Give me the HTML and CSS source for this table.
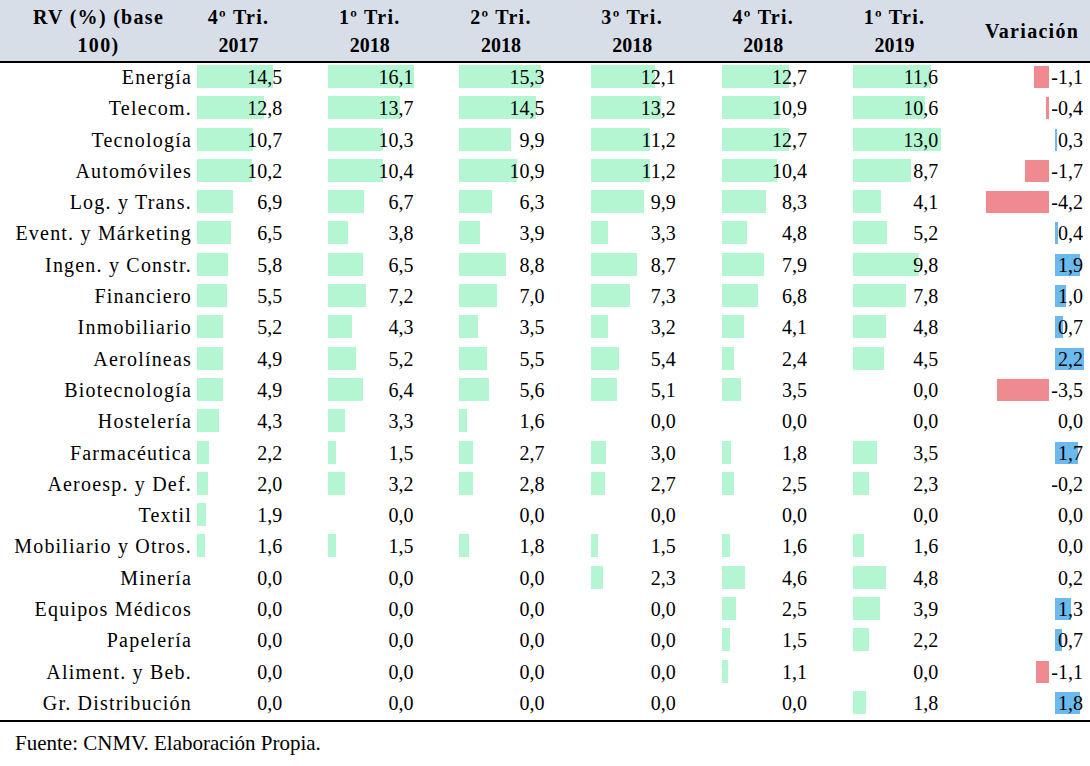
FILE: index.html
```html
<!DOCTYPE html>
<html lang="es">
<head>
<meta charset="utf-8">
<title>RV (%) por sector</title>
<link rel="stylesheet" href="styles.css">
</head>
<body>
<div class="table">
  <div class="row head">
    <div class="hcell lab"><span>RV (%) (base<br>100)</span></div>
    <div class="hcell num"><span>4º Tri.<br><b class="yr">2017</b></span></div>
    <div class="hcell num"><span>1º Tri.<br><b class="yr">2018</b></span></div>
    <div class="hcell num"><span>2º Tri.<br><b class="yr">2018</b></span></div>
    <div class="hcell num"><span>3º Tri.<br><b class="yr">2018</b></span></div>
    <div class="hcell num"><span>4º Tri.<br><b class="yr">2018</b></span></div>
    <div class="hcell num"><span>1º Tri.<br><b class="yr">2019</b></span></div>
    <div class="hcell var"><span>Variación</span></div>
  </div>
  <div class="body" id="body"></div>
</div>
<p class="source">Fuente: CNMV. Elaboración Propia.</p>
<script src="script.js"></script>
</body>
</html>
```

FILE: script.js
```js
var rows = [
  ["Energía",            ["14,5",76],["16,1",86],["15,3",82],["12,1",64],["12,7",67],["11,6",78],["-1,1",-15]],
  ["Telecom.",           ["12,8",67],["13,7",72],["14,5",77],["13,2",70],["10,9",58],["10,6",72],["-0,4",-3]],
  ["Tecnología",         ["10,7",56],["10,3",55],["9,9",52],["11,2",59],["12,7",67],["13,0",88],["0,3",2]],
  ["Automóviles",        ["10,2",55],["10,4",55],["10,9",58],["11,2",59],["10,4",55],["8,7",58],["-1,7",-24]],
  ["Log. y Trans.",      ["6,9",36],["6,7",36],["6,3",33],["9,9",53],["8,3",44],["4,1",28],["-4,2",-63]],
  ["Event. y Márketing", ["6,5",34],["3,8",20],["3,9",21],["3,3",17],["4,8",25],["5,2",34],["0,4",3]],
  ["Ingen. y Constr.",   ["5,8",31],["6,5",35],["8,8",47],["8,7",46],["7,9",42],["9,8",66],["1,9",25]],
  ["Financiero",         ["5,5",30],["7,2",38],["7,0",38],["7,3",39],["6,8",36],["7,8",53],["1,0",11]],
  ["Inmobiliario",       ["5,2",26],["4,3",24],["3,5",19],["3,2",17],["4,1",22],["4,8",33],["0,7",8]],
  ["Aerolíneas",         ["4,9",26],["5,2",28],["5,5",28],["5,4",28],["2,4",12],["4,5",31],["2,2",29]],
  ["Biotecnología",      ["4,9",26],["6,4",35],["5,6",30],["5,1",26],["3,5",19],["0,0",0],["-3,5",-52]],
  ["Hostelería",         ["4,3",22],["3,3",17],["1,6",8],["0,0",0],["0,0",0],["0,0",0],["0,0",0]],
  ["Farmacéutica",       ["2,2",12],["1,5",8],["2,7",14],["3,0",15],["1,8",9],["3,5",24],["1,7",23]],
  ["Aeroesp. y Def.",    ["2,0",11],["3,2",17],["2,8",14],["2,7",14],["2,5",12],["2,3",16],["-0,2",0]],
  ["Textil",             ["1,9",9],["0,0",0],["0,0",0],["0,0",0],["0,0",0],["0,0",0],["0,0",0]],
  ["Mobiliario y Otros.",["1,6",8],["1,5",8],["1,8",10],["1,5",7],["1,6",8],["1,6",11],["0,0",0]],
  ["Minería",            ["0,0",0],["0,0",0],["0,0",0],["2,3",12],["4,6",23],["4,8",33],["0,2",0]],
  ["Equipos Médicos",    ["0,0",0],["0,0",0],["0,0",0],["0,0",0],["2,5",14],["3,9",27],["1,3",16]],
  ["Papelería",          ["0,0",0],["0,0",0],["0,0",0],["0,0",0],["1,5",8],["2,2",16],["0,7",7]],
  ["Aliment. y Beb.",    ["0,0",0],["0,0",0],["0,0",0],["0,0",0],["1,1",6],["0,0",0],["-1,1",-13]],
  ["Gr. Distribución",   ["0,0",0],["0,0",0],["0,0",0],["0,0",0],["0,0",0],["1,8",13],["1,8",25]]
];
var body = document.getElementById("body");
rows.forEach(function (r) {
  var row = document.createElement("div");
  row.className = "row";
  var lab = document.createElement("div");
  lab.className = "cell lab";
  lab.textContent = r[0];
  row.appendChild(lab);
  for (var i = 1; i <= 7; i++) {
    var c = r[i];
    var cell = document.createElement("div");
    cell.className = i === 7 ? "cell var" : "cell num";
    if (c[1] !== 0) {
      var bar = document.createElement("span");
      if (i === 7) {
        bar.className = c[1] < 0 ? "bar neg" : "bar pos";
      } else {
        bar.className = "bar green";
      }
      bar.style.width = Math.abs(c[1]) + "px";
      cell.appendChild(bar);
    }
    var v = document.createElement("span");
    v.className = "val";
    v.textContent = c[0];
    cell.appendChild(v);
    row.appendChild(cell);
  }
  body.appendChild(row);
});
```

FILE: styles.css
```css
html, body {
  margin: 0;
  padding: 0;
  background: #ffffff;
}
body {
  width: 1090px;
  font-family: "Liberation Serif", "Times New Roman", serif;
  color: #000;
}
.table {
  width: 1090px;
}
.row {
  display: grid;
  grid-template-columns: 195px repeat(6, 131.2px) 1fr;
}
.head {
  height: 61px;
  background: #d8dee8;
  border-bottom: 2px solid #000;
}
.hcell {
  display: flex;
  align-items: center;
  justify-content: center;
  text-align: center;
  font-weight: bold;
  font-size: 20px;
  line-height: 28px;
  letter-spacing: 1.3px;
}
.hcell.num {
  padding-right: 44px;
}
.hcell.var {
  padding-right: 8px;
  padding-top: 1px;
}
.hcell.lab {
  padding-left: 2px;
}
.yr {
  letter-spacing: 0;
}
.body {
  border-bottom: 2px solid #000;
}
.body .row {
  height: 31.3px;
}
.cell {
  position: relative;
  font-size: 20px;
  line-height: 29.5px;
  white-space: nowrap;
}
.cell.lab {
  text-align: right;
  padding-right: 3px;
  letter-spacing: 1.2px;
}
.cell.num {
  text-align: right;
  padding-right: 44px;
}
.cell.var {
  text-align: right;
  padding-right: 7px;
}
.val {
  position: relative;
}
.bar {
  position: absolute;
  top: 2px;
  height: 23px;
}
.bar.green {
  left: 2px;
  background: #b3f6d1;
}
.bar.neg {
  right: 41px;
  top: 3px;
  height: 22px;
  background: #f08a91;
}
.bar.pos {
  left: 73px;
  top: 3px;
  height: 22px;
  background: #6cb9ee;
}
.source {
  margin: 9px 0 0 15px;
  font-size: 21px;
  line-height: 24px;
}
```
